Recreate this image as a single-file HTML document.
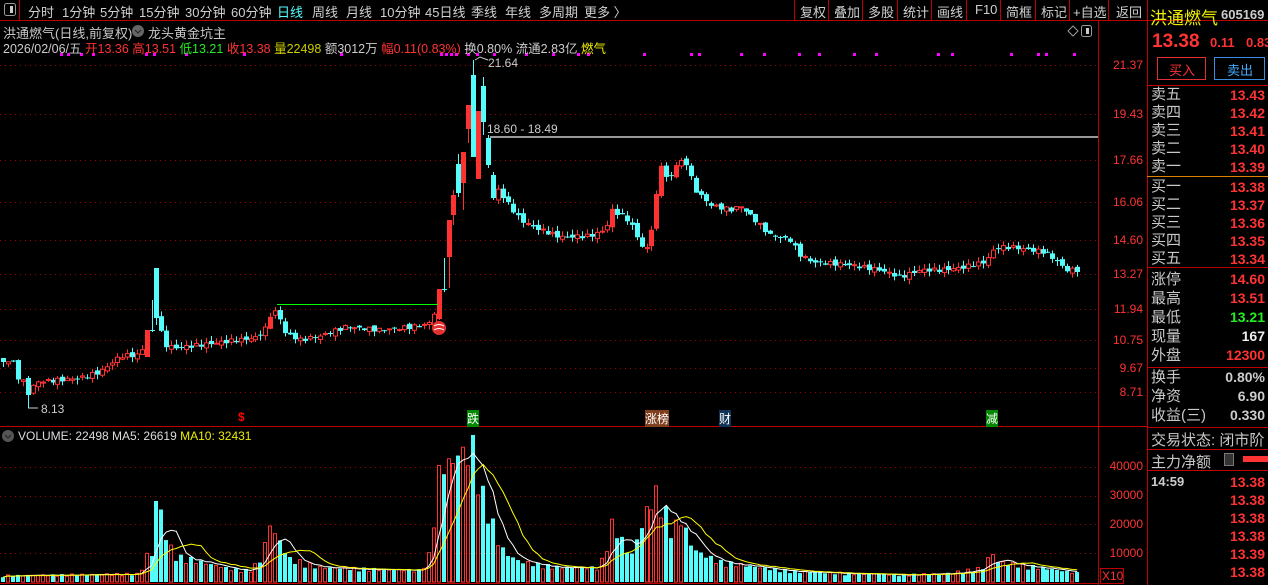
<!DOCTYPE html><html><head><meta charset="utf-8"><style>
*{margin:0;padding:0;box-sizing:border-box}
body{width:1268px;height:585px;background:#000;overflow:hidden;position:relative;font-family:"Liberation Sans","Noto Sans CJK SC",sans-serif;color:#c8c8c8}
.a{position:absolute;white-space:nowrap}
.tp{font-size:13px;top:2px;color:#d0d0d0}
.rp{font-size:15px;color:#c8c8c8}
.rv{font-size:14px;font-weight:bold;color:#ff3333;text-align:right;width:80px;left:1185px}
.ax{font-size:12px;color:#ff3333;left:1106px;width:37px;text-align:right}
</style></head><body>
<svg id="s" width="1268" height="585" style="position:absolute;left:0;top:0">
<line x1="0" y1="20.5" x2="1268" y2="20.5" stroke="#c00000"/>
<line x1="1098.5" y1="20" x2="1098.5" y2="585" stroke="#c00000"/>
<line x1="1147.5" y1="0" x2="1147.5" y2="585" stroke="#c00000"/>
<line x1="0" y1="426.5" x2="1147" y2="426.5" stroke="#c00000"/>
<line x1="0" y1="583.5" x2="1098" y2="583.5" stroke="#c00000"/>
<line x1="19.5" y1="0" x2="19.5" y2="20" stroke="#c00000"/>
<rect x="4.5" y="3.5" width="11" height="12" rx="2" fill="none" stroke="#999"/><rect x="10" y="6" width="3" height="7" fill="#ccc"/>
<g stroke="#c00000"><line x1="794.5" y1="0" x2="794.5" y2="20"/><line x1="828.5" y1="0" x2="828.5" y2="20"/><line x1="862.5" y1="0" x2="862.5" y2="20"/><line x1="897.5" y1="0" x2="897.5" y2="20"/><line x1="931.5" y1="0" x2="931.5" y2="20"/><line x1="966.5" y1="0" x2="966.5" y2="20"/><line x1="1000.5" y1="0" x2="1000.5" y2="20"/><line x1="1035.5" y1="0" x2="1035.5" y2="20"/><line x1="1069.5" y1="0" x2="1069.5" y2="20"/><line x1="1108.5" y1="0" x2="1108.5" y2="20"/></g>
<g stroke="#c00000"><line x1="1147" y1="85.5" x2="1268" y2="85.5"/><line x1="1147" y1="176.5" x2="1268" y2="176.5" stroke="#e08000"/><line x1="1147" y1="267.5" x2="1268" y2="267.5"/><line x1="1147" y1="367.5" x2="1268" y2="367.5"/><line x1="1147" y1="427.5" x2="1268" y2="427.5"/><line x1="1147" y1="449.5" x2="1268" y2="449.5"/><line x1="1147" y1="470.5" x2="1268" y2="470.5"/></g>
<rect x="1157.5" y="57.5" width="48" height="22" fill="none" stroke="#e03030"/>
<rect x="1214.5" y="57.5" width="50" height="22" fill="none" stroke="#3a8ee0"/>
<rect x="1243" y="456" width="25" height="6" fill="#ff3333"/>
<rect x="1224.5" y="453.5" width="9" height="12" fill="#333" stroke="#777"/>
<path d="M1068 31l5-5 5 5-5 5z" fill="none" stroke="#999"/>
<rect x="1081.5" y="25.5" width="10" height="11" rx="2" fill="none" stroke="#999"/><rect x="1086" y="28" width="3" height="6" fill="#ccc"/>
<rect x="1100.5" y="568.5" width="23" height="15" fill="none" stroke="#c00000"/>
<circle cx="8" cy="436" r="6" fill="#555"/><path d="M5 435l3 3 3-3" stroke="#222" fill="none"/>
<circle cx="138" cy="31" r="6" fill="#666"/><path d="M135 30l3 3 3-3" stroke="#222" fill="none"/>
<g id="g"></g>
</svg>
<div class="a tp" style="left:28px">分时</div><div class="a tp" style="left:62px">1分钟</div><div class="a tp" style="left:100px">5分钟</div><div class="a tp" style="left:139px">15分钟</div><div class="a tp" style="left:185px">30分钟</div><div class="a tp" style="left:231px">60分钟</div><div class="a tp" style="left:277px;color:#5ff">日线</div><div class="a tp" style="left:312px">周线</div><div class="a tp" style="left:346px">月线</div><div class="a tp" style="left:380px">10分钟</div><div class="a tp" style="left:425px">45日线</div><div class="a tp" style="left:471px">季线</div><div class="a tp" style="left:505px">年线</div><div class="a tp" style="left:539px">多周期</div><div class="a tp" style="left:584px">更多 〉</div>
<div class="a tp" style="left:800px">复权</div><div class="a tp" style="left:834px">叠加</div><div class="a tp" style="left:868px">多股</div><div class="a tp" style="left:903px">统计</div><div class="a tp" style="left:937px">画线</div><div class="a tp" style="left:975px">F10</div><div class="a tp" style="left:1006px">简框</div><div class="a tp" style="left:1041px">标记</div><div class="a tp" style="left:1073px">+自选</div><div class="a tp" style="left:1116px">返回</div>
<div class="a" style="left:3px;top:23px;font-size:13px">洪通燃气(日线,前复权)</div><div class="a" style="left:148px;top:23px;font-size:13px">龙头黄金坑主</div>
<div class="a" style="left:3px;top:38px;font-size:12.5px;color:#ccc">2026/02/06/五 <span style="color:#f33">开13.36 高13.51</span> <span style="color:#2e2">低13.21</span> <span style="color:#f33">收13.38</span> <span style="color:#cc0">量22498</span> 额3012万 <span style="color:#f33">幅0.11(0.83%)</span> 换0.80% 流通2.83亿 <span style="color:#ee0">燃气</span></div>
<div class="a" style="left:488px;top:56px;font-size:12px;color:#ccc">21.64</div>
<div class="a" style="left:487px;top:122px;font-size:12px;color:#ccc">18.60 - 18.49</div>
<div class="a" style="left:41px;top:402px;font-size:12px;color:#ccc">8.13</div>
<div class="a" style="left:238px;top:410px;font-size:12px;color:#f00;font-weight:bold">$</div>
<div class="a" style="left:467px;top:410px;font-size:12px;color:#fff;background:#080">跌</div>
<div class="a" style="left:645px;top:410px;font-size:12px;color:#fff;background:#804020">涨榜</div>
<div class="a" style="left:719px;top:410px;font-size:12px;color:#fff;background:#135">财</div>
<div class="a" style="left:986px;top:410px;font-size:12px;color:#fff;background:#080">减</div>
<div class="a" style="left:18px;top:429px;font-size:12px;color:#ddd">VOLUME: 22498 MA5: 26619 <span style="color:#ee0">MA10: 32431</span></div>
<div class="a ax" style="top:58px">21.37</div><div class="a ax" style="top:107px">19.43</div><div class="a ax" style="top:153px">17.66</div><div class="a ax" style="top:195px">16.06</div><div class="a ax" style="top:233px">14.60</div><div class="a ax" style="top:267px">13.27</div><div class="a ax" style="top:302px">11.94</div><div class="a ax" style="top:333px">10.75</div><div class="a ax" style="top:361px">9.67</div><div class="a ax" style="top:385px">8.71</div>
<div class="a ax" style="top:459px">40000</div><div class="a ax" style="top:488px">30000</div><div class="a ax" style="top:517px">20000</div><div class="a ax" style="top:546px">10000</div><div class="a" style="left:1102px;top:569px;font-size:12px;color:#f33">X10</div>
<div class="a" style="left:1150px;top:4px;font-size:17px;color:#ee0">洪通燃气</div><div class="a" style="left:1221px;top:7px;font-size:13px;font-weight:bold;color:#ccc">605169</div>
<div class="a" style="left:1152px;top:31px;font-size:19px;font-weight:bold;color:#f33">13.38</div><div class="a" style="left:1210px;top:35px;font-size:13px;font-weight:bold;color:#f33">0.11</div><div class="a" style="left:1246px;top:35px;font-size:13px;font-weight:bold;color:#f33">0.83</div>
<div class="a" style="left:1169px;top:60px;font-size:13px;color:#f33">买入</div><div class="a" style="left:1227px;top:60px;font-size:13px;color:#4af">卖出</div>
<div class="a rp" style="left:1151px;top:86px;line-height:18px">卖五<br>卖四<br>卖三<br>卖二<br>卖一</div>
<div class="a rv" style="top:86px;line-height:18px">13.43<br>13.42<br>13.41<br>13.40<br>13.39</div>
<div class="a rp" style="left:1151px;top:178px;line-height:18px">买一<br>买二<br>买三<br>买四<br>买五</div>
<div class="a rv" style="top:178px;line-height:18px">13.38<br>13.37<br>13.36<br>13.35<br>13.34</div>
<div class="a rp" style="left:1151px;top:270px;line-height:19px">涨停<br>最高<br>最低<br>现量<br>外盘</div>
<div class="a rv" style="top:270px;line-height:19px">14.60<br>13.51<br><span style="color:#2e2">13.21</span><br><span style="color:#eee">167</span><br>12300</div>
<div class="a rp" style="left:1151px;top:368px;line-height:19px">换手<br>净资<br>收益(三)</div>
<div class="a rv" style="top:368px;line-height:19px;color:#ccc">0.80%<br>6.90<br>0.330</div>
<div class="a rp" style="left:1151px;top:429px">交易状态: 闭市阶</div>
<div class="a rp" style="left:1151px;top:451px">主力净额</div>
<div class="a" style="left:1151px;top:474px;font-size:13px;font-weight:bold;color:#ccc">14:59</div>
<div class="a rv" style="top:473px;line-height:18px">13.38<br>13.38<br>13.38<br>13.38<br>13.39<br>13.38</div>
<script>
(function(){
var g=document.getElementById('g'),h='';
function L(x1,y1,x2,y2,c,d){h+='<line x1="'+x1+'" y1="'+y1+'" x2="'+x2+'" y2="'+y2+'" stroke="'+c+'"'+(d?' stroke-dasharray="'+d+'"':'')+'/>';}
[65,114,160,202,240,274,309,340,368,392,467,496,524,553].forEach(function(y){L(0,y+.5,1098,y+.5,'#a00000','1 4');});
[60,67,80,92,145,153,185,243,340,440,445,450,455,467,476,493,525,552,577,587,643,690,698,740,763,798,818,853,875,937,951,1010,1037,1045,1073].forEach(function(x){h+='<rect x="'+x+'" y="53" width="3" height="3" fill="#f0f"/>';});
var P=[[3,362],[12,360],[18,378],[23,382],[28,395],[35,382],[60,380],[80,378],[100,372],[120,356],[140,355],[147,330],[157,318],[165,345],[175,348],[200,345],[230,341],[255,338],[265,330],[272,310],[279,315],[285,333],[300,340],[320,336],[345,327],[380,330],[420,326],[432,322],[438,289],[448,222],[458,190],[463,158],[470,110],[474,90],[480,180],[485,88],[490,155],[495,185],[505,200],[520,220],[535,228],[560,237],[590,236],[605,230],[612,210],[620,215],[630,222],[640,245],[648,250],[655,205],[662,160],[668,185],[675,165],[685,160],[695,190],[710,205],[730,210],[740,206],[755,220],[770,235],[790,240],[800,255],[812,262],[850,265],[880,270],[900,277],[920,270],[940,270],[960,268],[985,262],[995,248],[1010,247],[1030,250],[1045,252],[1058,262],[1066,270],[1080,270]];
var V=[[0,2200],[140,2800],[147,10000],[152,9000],[157,31000],[162,23000],[167,15000],[175,9000],[190,8000],[200,7000],[230,4500],[250,4000],[262,8000],[270,20000],[280,14000],[290,8000],[320,5000],[420,4000],[430,10000],[438,37000],[446,42000],[452,40000],[458,45000],[466,44000],[474,47000],[480,33000],[490,24000],[497,15000],[505,10000],[520,7000],[560,5000],[600,5000],[612,20000],[620,16000],[630,8000],[650,28000],[658,31000],[664,26000],[672,18000],[682,22000],[692,12000],[700,10000],[720,7000],[760,5000],[800,3500],[900,2500],[950,3000],[985,5000],[991,11000],[997,7000],[1040,5000],[1080,3000]];
var OV={5:[378,395,376,408],29:[357,330,330,357],30:[330,330,300,332],31:[268,318,268,325],88:[319,289,289,320],89:[289,290,258,292],90:[257,220,220,288],91:[215,195,190,225],92:[164,193,154,197],93:[183,152,152,210],94:[129,105,105,143],95:[75,157,60,157],96:[179,111,111,179],97:[86,122,77,135],98:[138,165,135,168],99:[175,198,172,200]};
function interp(A,x){for(var i=1;i<A.length;i++){if(x<=A[i][0]){var a=A[i-1],b=A[i],t=(x-a[0])/(b[0]-a[0]);return a[1]+(b[1]-a[1])*t;}}return A[A.length-1][1];}
var n=218,prev=362,vols=[],ups=[],xs=[];
for(var i=0;i<n;i++){var x=3+i*4.95;xs.push(x);var c=interp(P,x)+Math.sin(i*2.7)*2;var o=prev+Math.sin(i*1.9)*2;if(i==0)o=358;
var bt,bb,hi,lo;
if(OV[i]){o=OV[i][0];c=OV[i][1];bt=Math.min(o,c);bb=Math.max(o,c);hi=OV[i][2];lo=OV[i][3];if(bb-bt<1)bb=bt+1;}
else{bt=Math.min(o,c);bb=Math.max(o,c);if(bb-bt<1){bb=bt+1}
hi=bt-Math.abs(Math.sin(i*3.1))*5;lo=bb+Math.abs(Math.cos(i*2.3))*5;}
var up=c<o;var col=up?'#ff3232':'#54fcfc',cx=Math.round(x)+.5;
L(cx,hi,cx,lo,col);
if(up){if(bb-bt>12)h+='<rect x="'+(cx-2.5)+'" y="'+bt+'" width="5" height="'+(bb-bt)+'" fill="'+col+'"/>';else h+='<rect x="'+(cx-2)+'" y="'+bt+'" width="4" height="'+(bb-bt)+'" fill="#000" stroke="'+col+'"/>';}
else h+='<rect x="'+(cx-2.5)+'" y="'+bt+'" width="5" height="'+(bb-bt)+'" fill="'+col+'"/>';
ups.push(up);var v=interp(V,x)*(0.75+0.35*Math.abs(Math.sin(i*1.7)));vols.push(v);prev=c;}
L(277,304.5,438,304.5,'#0f0');h+='<rect x="490" y="136" width="608" height="2" fill="#999"/>';
L(28,408,38,408,'#ccc');h+='<path d="M475 60l5-3 8 3" stroke="#ccc" fill="none"/>';h+='<circle cx="439" cy="328" r="7" fill="#e03030"/><path d="M434 326q5-3 10 0M434 330q5-3 10 0" stroke="#fff" fill="none"/>';
function vy(v){return 582-v*0.0029;}
for(var i=0;i<n;i++){var cx=Math.round(xs[i]),y=vy(vols[i]);if(ups[i])h+='<rect x="'+(cx-1.5)+'" y="'+y+'" width="3" height="'+(582-y)+'" fill="none" stroke="#ff3232"/>';else h+='<rect x="'+(cx-2)+'" y="'+y+'" width="4" height="'+(582-y)+'" fill="#54fcfc"/>';}
function ma(k,col){var p='';for(var i=0;i<n;i++){var s=0,m=0;for(var j=Math.max(0,i-k+1);j<=i;j++){s+=vols[j];m++;}p+=(i?'L':'M')+xs[i].toFixed(1)+' '+vy(s/m).toFixed(1);}h+='<path d="'+p+'" fill="none" stroke="'+col+'" stroke-width="1"/>';}
ma(5,'#fff');ma(10,'#ff0');
g.innerHTML=h;
})();
</script>
</body></html>
